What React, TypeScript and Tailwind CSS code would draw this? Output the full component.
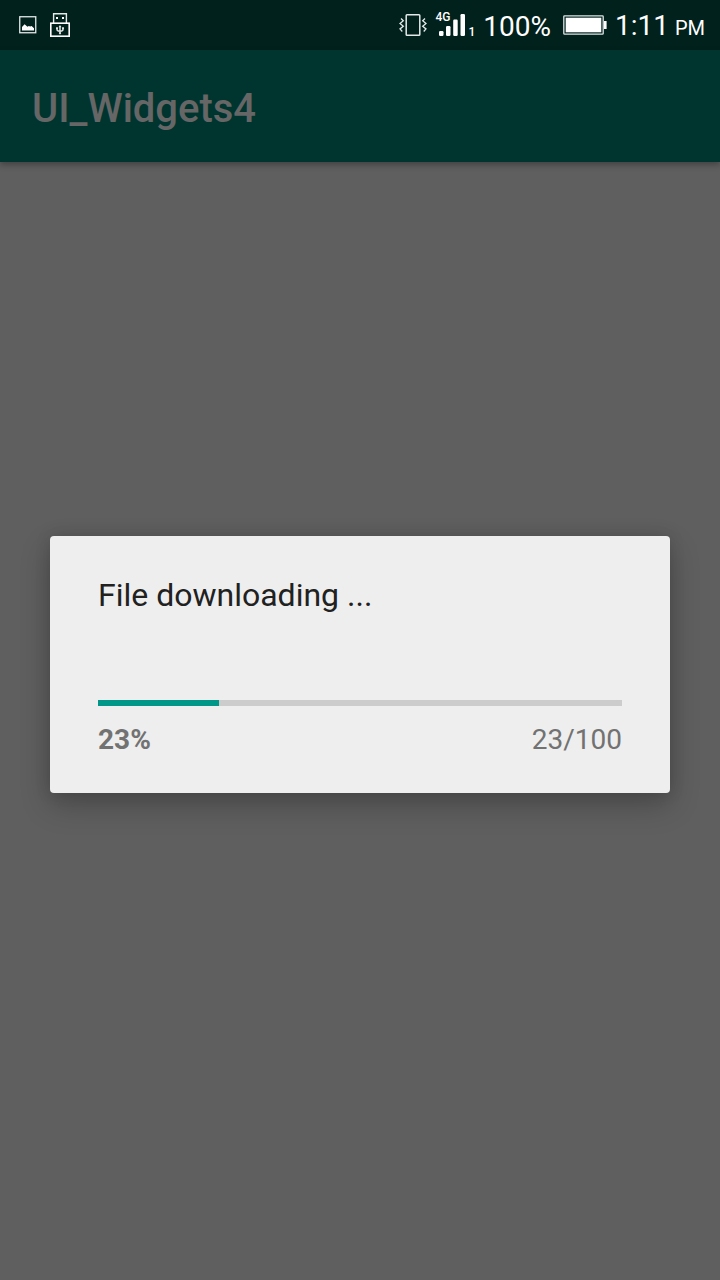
function ImageIcon() {
  return (
    <svg width="18" height="18" viewBox="0 0 18 18" aria-hidden="true">
      <rect x="0.75" y="0.75" width="16" height="16" fill="none" stroke="#e4e9e8" strokeWidth="1.3" />
      <path d="M3 14.6V11l1.4-1.4 1.2-1.4 1.7 1.6 1.2 1 1.3-.9 1.4.7L12.6 10l2.4 2.2v2.4z" fill="#fff" />
    </svg>
  );
}

function UsbIcon() {
  return (
    <svg width="20" height="24" viewBox="0 0 20 24" aria-hidden="true">
      <path d="M3.6 10V.8h12.8V10" fill="none" stroke="#e4e9e8" strokeWidth="1.4" />
      <rect x="0.8" y="10.2" width="18.4" height="13" fill="none" stroke="#fff" strokeWidth="1.6" />
      <rect x="6" y="4" width="2" height="2" fill="#fff" />
      <rect x="12" y="4" width="2" height="2" fill="#fff" />
      <path d="M10 13v7.5M7 15v1.6c0 1 1 1.7 3 1.7s3-.7 3-1.7V15" fill="none" stroke="#dfe5e4" strokeWidth="1.5" />
      <path d="M8.5 14.2 10 12l1.5 2.2zM6 14.3h2V16H6zM12 14.3h2V16h-2z" fill="#dfe5e4" />
      <circle cx="10" cy="20.3" r="1.1" fill="#dfe5e4" />
    </svg>
  );
}

function VibrateIcon() {
  return (
    <svg width="28" height="22" viewBox="0 0 28 22" fill="none" stroke="#e4e9e8" aria-hidden="true">
      <rect x="7.2" y="0.8" width="13.6" height="20.4" rx="0.8" strokeWidth="1.5" />
      <path d="M2 4.5 4.300 6.800 1 9.500 4.300 12.200 1 14.900 3.300 17.500" strokeWidth="1.3" />
      <path d="M26 4.5 23.700 6.800 27 9.500 23.700 12.200 27 14.900 24.700 17.500" strokeWidth="1.3" />
    </svg>
  );
}

function SignalBars() {
  return (
    <svg width="27" height="23" viewBox="0 0 27 23" fill="#fff" aria-hidden="true">
      <rect x="0" y="17" width="4.5" height="5" rx="1.2" />
      <rect x="7" y="12" width="4.5" height="10" rx="1.2" />
      <rect x="14.2" y="5.5" width="4.5" height="16.5" rx="1.2" />
      <rect x="21.5" y="0" width="4.5" height="22" rx="1.2" />
    </svg>
  );
}

function BatteryIcon() {
  return (
    <svg width="44" height="20" viewBox="0 0 44 20" aria-hidden="true">
      <rect x="0.8" y="0.8" width="39.4" height="18.4" rx="0.8" fill="none" stroke="#dfe5e4" strokeWidth="1.3" />
      <rect x="2.7" y="2.7" width="35.6" height="14.6" fill="#fff" />
      <rect x="41" y="6" width="2.6" height="8" fill="#fff" />
    </svg>
  );
}

function StatusBar() {
  return (
    <header className="flex h-[50px] items-center justify-between bg-[#00211c] pl-[19px] pr-[15px] text-[28px] leading-8 text-white">
      <div className="flex items-center gap-[13px]">
        <ImageIcon />
        <UsbIcon />
      </div>
      <div className="flex items-center">
        <VibrateIcon />
        <div className="relative ml-3 mr-2 flex items-end">
          <SignalBars />
          <span className="absolute -left-1 -top-0.5 text-[12px] font-medium leading-[11px]">4G</span>
          <span className="ml-0.5 text-[12px] font-medium leading-[10px]">1</span>
        </div>
        <span className="pt-1">100%</span>
        <span className="ml-3">
          <BatteryIcon />
        </span>
        <time className="ml-2 flex items-baseline gap-1.5 pt-1">
          <span>1:11</span>
          <span className="text-[20px]">PM</span>
        </time>
      </div>
    </header>
  );
}

function ProgressDialog({ value, max }: { value: number; max: number }) {
  const percent = Math.round((value / max) * 100);
  return (
    <section
      role="dialog"
      aria-modal="true"
      aria-labelledby="progress-message"
      className="w-full rounded bg-[#eeeeee] px-12 pb-[37px] pt-10 shadow-[0_12px_30px_rgba(0,0,0,0.24),0_0_16px_rgba(0,0,0,0.12)]"
    >
      <p id="progress-message" className="text-[32px] leading-[38px] text-[#212121]">
        File downloading ...
      </p>
      <div
        role="progressbar"
        aria-labelledby="progress-message"
        aria-valuenow={value}
        aria-valuemin={0}
        aria-valuemax={max}
        className="mt-[86px] h-1.5 bg-[#cccccc]"
      >
        <div className="h-full bg-[#009688]" style={{ width: `${percent}%` }} />
      </div>
      <div className="mt-[17px] flex justify-between text-[28px] leading-[33px] text-[#727272]">
        <span className="font-bold">{percent}%</span>
        <span>
          {value}/{max}
        </span>
      </div>
    </section>
  );
}

export default function App() {
  return (
    <div className="flex min-h-screen flex-col bg-[#5f5f5f] font-['Roboto',sans-serif]">
      <StatusBar />
      <div className="relative flex flex-1 flex-col">
        <div className="flex h-28 items-center bg-[#00352f] px-8 pt-1.5 shadow-[0_3px_6px_rgba(0,0,0,0.3)]">
          <h1 className="text-[40px] font-medium leading-[48px] text-[#666666]">UI_Widgets4</h1>
        </div>
        <main className="absolute inset-0 flex items-center px-[50px] pb-0.5">
          <ProgressDialog value={23} max={100} />
        </main>
      </div>
    </div>
  );
}
